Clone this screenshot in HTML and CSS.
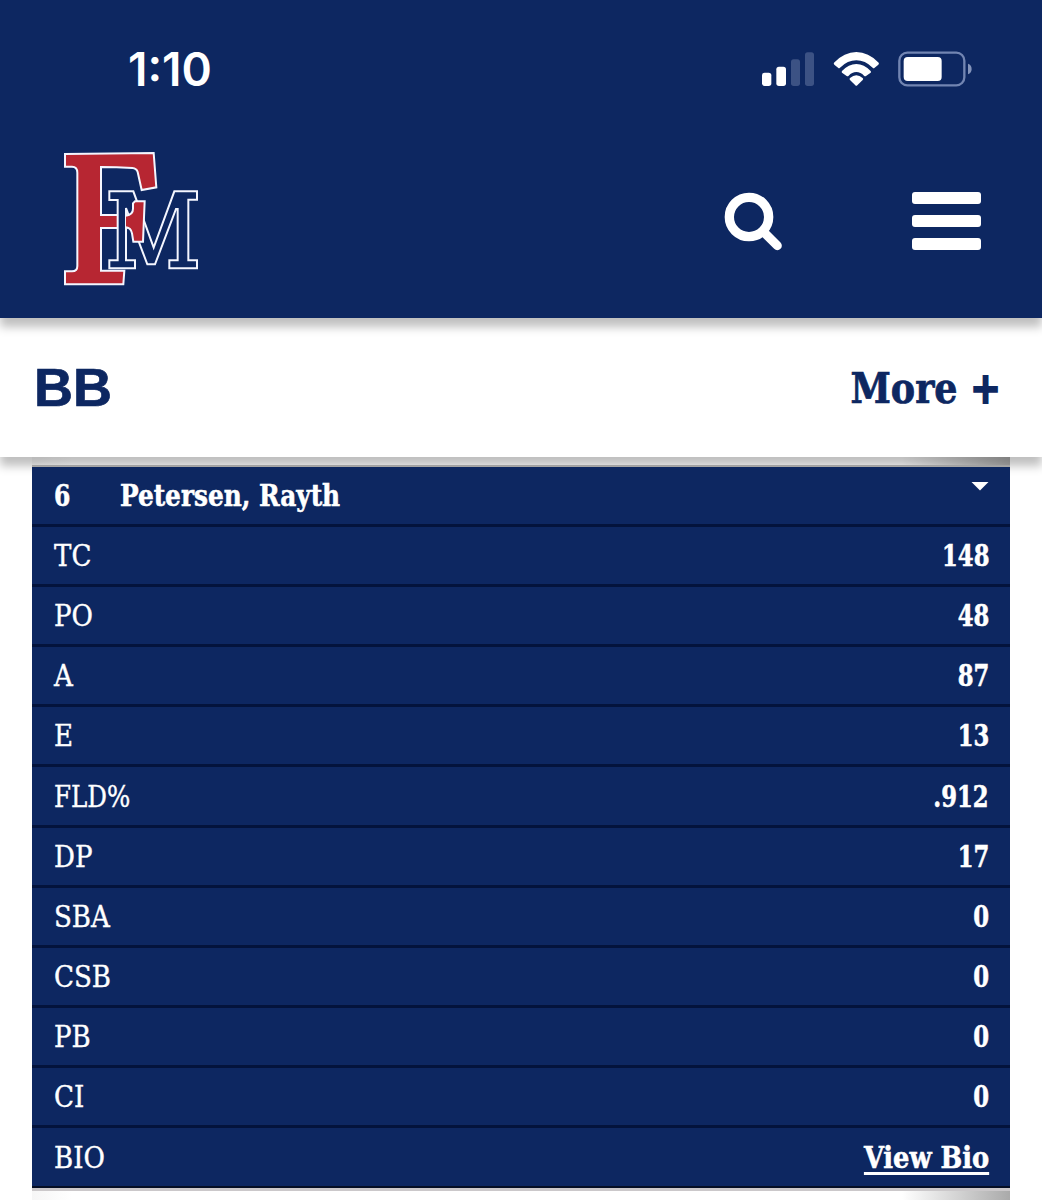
FILE: index.html
```html
<!DOCTYPE html>
<html lang="en">
<head>
<meta charset="utf-8">
<title>BB</title>
<link rel="stylesheet" href="styles.css">
</head>
<body>
<header class="top">
  <div class="status">
    <span class="time">1:10</span>
    <svg class="status-icons" width="240" height="60" viewBox="0 0 720 180">
      <g fill="#fff"><rect x="36" y="98" width="28" height="40" rx="8"/><rect x="79" y="80" width="29" height="58" rx="8"/></g>
      <g fill="#3c5284"><rect x="123" y="58" width="27" height="80" rx="8"/><rect x="165" y="37" width="27" height="101" rx="8"/></g>
      <g fill="#fff">
        <path d="M252 68Q283 36 319 36T386 68Q388 71 385 74L373 84Q371 86 368 83Q345 61 319 61T270 83Q267 86 265 84L253 74Q250 71 252 68Z"/>
        <path d="M276 93Q296 72 319 72T362 93Q364 96 362 98L348 108Q345 110 342 107Q332 96 319 96T296 107Q293 110 290 108L276 98Q274 96 276 93Z"/>
        <path d="M300 114Q319 98 338 114Q341 117 338 120L322 136Q319 139 316 136L300 120Q297 117 300 114Z"/>
      </g>
      <rect x="448" y="38" width="195" height="98" rx="24" fill="none" stroke="#7285b2" stroke-width="7"/>
      <rect x="461" y="51" width="114" height="72" rx="12" fill="#fff"/>
      <path d="M654 71Q665 75 665 87T654 103Z" fill="#8494ba"/>
    </svg>
  </div>
  <div class="nav">
    <svg class="logo" width="160" height="155" viewBox="0 0 480 465" stroke="#f4f6ff" stroke-width="6">
      <path fill="#b72632" d="M45 42L311 39L319 142L275 150L263 96Q260 85 247 84Q200 81 153 81V225H230V264H153V392H223L220 433H45V394H66Q82 394 82 378V98Q82 80 66 80H45Z"/>
      <path fill="#0d2761" d="M178 154H250L311 323L373 154H441V179H415V361H441V385H358V361H383V207H378L315 373H292L228 204V361H255V385H178V361H203V180H178Z"/>
      <path fill="#b72632" stroke="none" d="M231 226H250V263H231Z"/>
      <path fill="#b72632" d="M228 227Q249 224 249 206V190L255 184H284L279 305H250L246 280Q243 264 228 262"/>
    </svg>
    <svg class="search" width="60" height="60" viewBox="0 0 180 180" fill="none" stroke="#fff">
      <circle cx="78" cy="81" r="59" stroke-width="28"/>
      <path d="M121 125L163 167" stroke-width="27" stroke-linecap="round"/>
    </svg>
    <div class="menu"><i></i><i></i><i></i></div>
  </div>
</header>
<section class="sport">
  <h1>BB</h1>
  <a class="more">More <span>+</span></a>
</section>
<main class="stats">
  <div class="row player"><b class="num">6</b><b class="name">Petersen, Rayth</b><i class="caret"></i></div>
  <div class="row"><span>TC</span><b>148</b></div>
  <div class="row"><span>PO</span><b>48</b></div>
  <div class="row"><span>A</span><b>87</b></div>
  <div class="row"><span>E</span><b>13</b></div>
  <div class="row"><span class="long">FLD%</span><b>.912</b></div>
  <div class="row"><span>DP</span><b>17</b></div>
  <div class="row"><span>SBA</span><b>0</b></div>
  <div class="row"><span>CSB</span><b>0</b></div>
  <div class="row"><span>PB</span><b>0</b></div>
  <div class="row"><span>CI</span><b>0</b></div>
  <div class="row"><span>BIO</span><b class="bio">View Bio</b></div>
</main>
</body>
</html>
```
FILE: styles.css
```css
* { box-sizing: border-box; }
body {
  margin: 0;
  height: 1200px;
  overflow: hidden;
  background: #fff;
  color: #fff;
  font-family: "Roboto Slab", "DejaVu Serif Condensed", "DejaVu Serif", serif;
  font-stretch: condensed;
}
svg { display: block; overflow: visible; }
.top {
  position: relative;
  z-index: 3;
  height: 318px;
  background: #0d2761;
  box-shadow: 0 9px 9px rgba(0, 0, 0, .25);
}
.status {
  display: flex;
  justify-content: space-between;
  height: 140px;
  padding: 40px 52px 0 128px;
}
.time {
  font: 600 46px/59px Inter, sans-serif;
}
.nav {
  display: flex;
  align-items: flex-start;
  padding-left: 50px;
}
.search {
  flex: none;
  margin: 50px 0 0 513px;
}
.menu {
  display: flex;
  flex: none;
  flex-direction: column;
  gap: 11px;
  width: 69px;
  margin: 52.4px 0 0 129px;
}
.menu i {
  height: 12px;
  border-radius: 3px;
  background: #fff;
}
.sport {
  position: relative;
  z-index: 2;
  display: flex;
  justify-content: space-between;
  align-items: center;
  height: 139px;
  padding: 0 43px 0 34px;
  background: #fff;
  color: #0d2761;
  box-shadow: 0 9px 9px rgba(0, 0, 0, .25);
}
h1 {
  margin: -2px 0 0;
  font: bold 54px/60px "Liberation Sans", sans-serif;
  -webkit-text-stroke: .7px;
}
.more {
  margin-top: 3px;
  font-size: 42px;
  font-weight: bold;
  line-height: 60px;
  transform: translateX(2px) scaleX(.965);
  transform-origin: right;
  -webkit-text-stroke: .7px;
}
.more span { -webkit-text-stroke: 1.8px; }
.stats {
  margin: 0 32px;
  padding-top: 10px;
  height: 743px;
  background:
    linear-gradient(#bbb, #bbb) 0 8px / 100% 2px no-repeat,
    linear-gradient(90deg, #f6f6f6, #fff 40px, #fff 870px, #aaa 978px);
}
.row {
  position: relative;
  z-index: 2;
  display: flex;
  align-items: center;
  justify-content: space-between;
  height: 60.1px;
  padding: 1px 21px 0 22px;
  border-bottom: 3px solid #03133c;
  background: #0d2761;
  font-size: 29px;
  line-height: 36px;
}
.row:first-child { z-index: 3; }
.row:last-child {
  border-bottom: 2px solid #050e24;
  box-shadow: 0 3px 0 #cbc8ca;
}
.row span {
  -webkit-text-stroke: .35px;
}
.row .long {
  transform: scaleX(.94);
  transform-origin: left;
}
.row b {
  transform: scaleX(.87);
  transform-origin: right;
  -webkit-text-stroke: .5px;
}
.player { justify-content: flex-start; }
.player .num {
  flex: none;
  width: 66px;
  transform: scaleX(.9);
  transform-origin: left;
}
.player .name {
  transform: scaleX(.95);
  transform-origin: left;
}
.caret {
  width: 18px;
  height: 9px;
  margin: -20px 0 0 auto;
  background: #fff;
  clip-path: polygon(0 0, 100% 0, 50% 100%);
}
.row .bio {
  transform: scaleX(.985);
  text-decoration: underline;
  text-decoration-thickness: 2.5px;
  text-underline-offset: 4px;
  text-decoration-skip-ink: none;
}
```
